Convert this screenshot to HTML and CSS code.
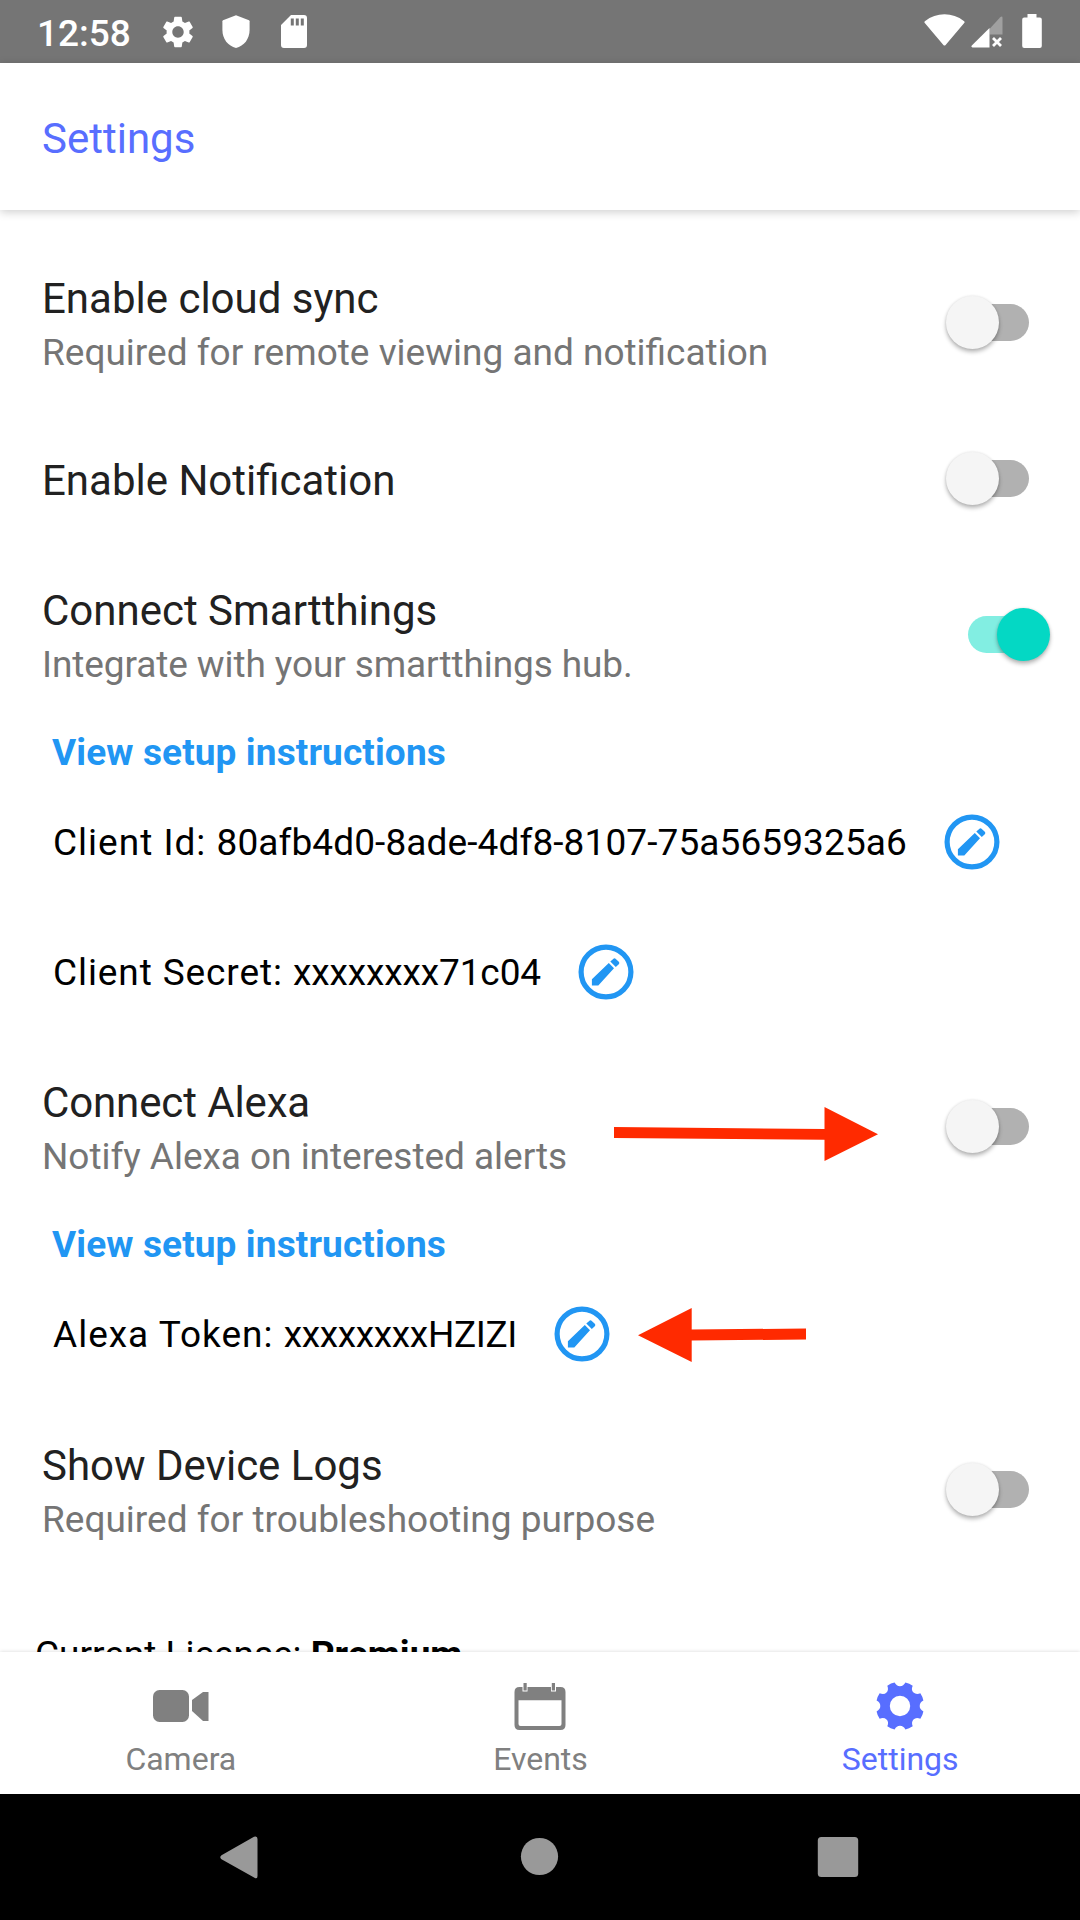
FILE: index.html
```
<!DOCTYPE html>
<html lang="en">
<head>
<meta charset="utf-8">
<title>Settings</title>
<link rel="stylesheet" href="styles.css">
</head>
<body>
<svg class="defs" aria-hidden="true">
  <symbol id="edit" viewBox="0 0 56 56">
    <circle cx="28" cy="28" r="24.9" fill="none" stroke="currentColor" stroke-width="5.2"/>
    <path fill="currentColor" d="M13.900 41.500V35.200L30.800 19 36 24.200 20.300 41.500zM32.300 17.500 35.200 14.900q1.300-1.200 2.600 0L40.800 17.800q1.200 1.200 0 2.500L37.800 22.900z"/>
  </symbol>
</svg>

<header class="status-bar">
  <span class="clock">12:58</span>
  <svg class="status-gear" viewBox="0 0 24 24"><path fill="#fff" d="M19.14 12.94c.04-.3.060-.61.060-.94 0-.32-.02-.64-.07-.94l2.030-1.580c.18-.14.230-.41.120-.61l-1.920-3.320c-.12-.22-.37-.29-.59-.22l-2.390.960c-.5-.38-1.030-.7-1.620-.94l-.36-2.540c-.04-.24-.24-.41-.48-.41h-3.840c-.24 0-.43.170-.47.410l-.36 2.540c-.59.240-1.130.570-1.620.940l-2.390-.96c-.22-.08-.47 0-.59.220L2.740 8.870c-.12.210-.08.470.120.610l2.030 1.580c-.05.300-.09.630-.09.940s.02.640.070.940l-2.030 1.580c-.18.140-.23.410-.12.610l1.920 3.320c.12.220.37.290.59.220l2.390-.96c.5.380 1.030.700 1.620.940l.36 2.540c.05.240.24.410.48.410h3.840c.24 0 .44-.17.470-.41l.36-2.540c.59-.24 1.130-.56 1.620-.94l2.390.960c.22.080.47 0 .59-.22l1.920-3.320c.12-.22.070-.47-.12-.61l-2.010-1.580zM12 15.600c-1.980 0-3.600-1.620-3.600-3.600s1.620-3.600 3.600-3.600 3.600 1.620 3.600 3.600-1.620 3.600-3.600 3.600z"/></svg>
  <svg class="status-shield" viewBox="0 0 28 33"><path fill="#fff" d="M14 .2 27 5.200q.6.3.6 1V15C27.600 24 22 31 14 33 6 31 .4 24 .4 15V6.200q0-.7.6-1z"/></svg>
  <svg class="status-card" viewBox="0 0 26 33"><path fill="#fff" fill-rule="evenodd" d="M10 0H23q3 0 3 3V30q0 3-3 3H3q-3 0-3-3V10zM9.800 3.500v7h3v-7zM14.800 3.500v7h3v-7zM19.800 3.500v7h3v-7z"/></svg>
  <div class="status-right">
    <svg class="wifi" viewBox="0 0 41 32"><path fill="#fff" d="M1 9.300Q-.3 8 1.200 6.900 9.800.3 20.500.3T39.800 6.900Q41.300 8 40 9.300L21.600 31q-1.100 1.200-2.200 0z"/></svg>
    <svg class="signal" viewBox="0 0 32 32"><path fill="#a0a0a0" d="M18.500 13 29 1.500Q31.500-.5 31.500 2V18.500h-13z"/><path fill="#fff" d="M18.500 12V31.500H1.500Q-.3 31 .8 29.500z"/><path stroke="#fff" stroke-width="2.800" d="m22 22 8 8m0-8-8 8"/></svg>
    <svg class="battery" viewBox="0 0 20 34"><path fill="#fff" d="M5.500 0h9v3.500h3.300q2 0 2 2V32q0 2-2 2H2.200q-2 0-2-2V5.500q0-2 2-2H5.500z"/></svg>
  </div>
</header>

<div class="app-bar"><h1>Settings</h1></div>

<main class="content">
  <section class="setting">
    <div class="label"><h2>Enable cloud sync</h2><p>Required for remote viewing and notification</p></div>
    <div class="switch"></div>
  </section>
  <section class="setting">
    <div class="label"><h2>Enable Notification</h2></div>
    <div class="switch"></div>
  </section>
  <section class="setting smartthings">
    <div class="label"><h2>Connect Smartthings</h2><p>Integrate with your smartthings hub.</p></div>
    <div class="switch on"></div>
  </section>
  <a class="instructions">View setup instructions</a>
  <div class="field"><span class="name">Client Id: </span><span class="value">80afb4d0-8ade-4df8-8107-75a5659325a6</span><svg class="edit"><use href="#edit"/></svg></div>
  <div class="field secret"><span class="name">Client Secret: </span><span class="value">xxxxxxxx71c04</span><svg class="edit"><use href="#edit"/></svg></div>
  <section class="setting alexa">
    <div class="label"><h2>Connect Alexa</h2><p>Notify Alexa on interested alerts</p></div>
    <svg class="arrow arrow-right" viewBox="0 0 264 54"><path fill="#ff2a00" d="M0 20 210.500 22V0L264 27.200 210.500 54V32.700L0 31z"/></svg>
    <div class="switch"></div>
  </section>
  <a class="instructions">View setup instructions</a>
  <div class="field token"><span class="name">Alexa Token: </span><span class="value">xxxxxxxxHZIZI</span><svg class="edit"><use href="#edit"/></svg>
    <svg class="arrow arrow-left" viewBox="0 0 168 54"><path fill="#ff2a00" d="M168 20.500 53.700 21.500V0L0 27.200 53.700 54V32.500L168 31.500z"/></svg>
  </div>
  <section class="setting logs">
    <div class="label"><h2>Show Device Logs</h2><p>Required for troubleshooting purpose</p></div>
    <div class="switch"></div>
  </section>
  <p class="license">Current License: <b>Premium</b></p>
</main>

<nav class="tabs">
  <div class="tab">
    <svg viewBox="0 0 56 48"><rect x="0" y="8" width="36" height="32" rx="6.500"/><path d="M39 20 50 12h5.500v29H50L39 31z" transform="translate(0 -2)"/></svg>
    <span>Camera</span>
  </div>
  <div class="tab">
    <svg viewBox="0 0 52 48"><path fill-rule="evenodd" d="M5 5H8.500V9.500H13.500V5H37V9.500H42V5H46.500Q51.500 5 51.500 10V43Q51.500 48 46.500 48H5.500Q.5 48 .5 43V10Q.5 5 5.500 5zM4.500 18.300V42q0 2 2 2H45.500q2 0 2-2V18.300zM9.500 1h3.200v7.500H9.500zM37.800 1H41v7.500H37.800z"/></svg>
    <span>Events</span>
  </div>
  <div class="tab active">
    <svg viewBox="0 0 48 48"><path fill-rule="evenodd" d="M29.400.6 Q33.500 1.400 36.700 3.650Q34.800 8 37.500 10.500T44.350 11.300Q46.800 15 47.400 18.600Q43.700 20.500 43.700 24T47.400 29.400Q46.600 33.500 44.350 36.700Q40 34.800 37.500 37.500T36.700 44.350Q33 46.800 29.400 47.400Q27.500 43.700 24 43.700T18.600 47.400Q14.500 46.600 11.300 44.350Q13.200 40 10.500 37.500T3.650 36.700Q1.200 33 .6 29.400Q4.300 27.500 4.300 24T.6 18.600Q1.400 14.500 3.650 11.300Q8 13.200 10.500 10.500T11.300 3.650Q15 1.200 18.600.6Q20.500 4.300 24 4.300T29.400.6zM24 13.800a10.200 10.200 0 1 0 0 20.400 10.200 10.200 0 0 0 0-20.400z"/></svg>
    <span>Settings</span>
  </div>
</nav>

<footer class="system-nav">
  <svg viewBox="0 0 44 44"><path fill="#999" d="M37 .8Q40.500-.5 40.500 3V40q0 3.500-3 1.800L4.500 23.300Q2 21.300 4.500 19.300z"/></svg>
  <svg viewBox="0 0 44 44"><circle cx="23.500" cy="20.500" r="18.600" fill="#999"/></svg>
  <svg viewBox="0 0 44 44"><rect x="1.800" y="1" width="40.400" height="40" rx="3.500" fill="#999"/></svg>
</footer>
</body>
</html>
```
FILE: styles.css
```
* { box-sizing: border-box; }
body {
  margin: 0;
  width: 1080px;
  height: 1920px;
  overflow: hidden;
  display: flex;
  flex-direction: column;
  background: #fff;
  font-family: Roboto, sans-serif;
}
h1, h2, p { margin: 0; font-weight: 400; }
svg { display: block; flex: none; }
.defs { position: absolute; width: 0; height: 0; }

.status-bar {
  flex: none;
  height: 63px;
  padding-left: 37px;
  display: flex;
  background: #757575;
  color: #fff;
}
.clock { width: 122px; font-size: 37px; line-height: 44px; font-weight: 500; padding-top: 12px; }
.status-gear { width: 38px; height: 38px; margin-top: 12.500px; }
.status-shield { width: 28px; height: 33px; margin: 15px 0 0 25px; }
.status-card { width: 26px; height: 33px; margin: 15px 0 0 31px; }
.status-right { display: flex; margin: 14px 38px 0 auto; }
.wifi { width: 41px; height: 32px; }
.signal { width: 32px; height: 32px; margin: 1.500px 0 0 6px; }
.battery { width: 20px; height: 34px; margin-left: 19px; }

.app-bar {
  flex: none;
  height: 147px;
  padding: 51px 0 0 42px;
  background: #fff;
  box-shadow: 0 2px 9px rgba(0, 0, 0, .2);
  z-index: 1;
}
.app-bar h1 { font-size: 42px; line-height: 49px; color: #586eff; }

.content {
  flex: 1;
  min-height: 0;
  overflow: hidden;
  padding-top: 34px;
  display: flex;
  flex-direction: column;
}
.setting {
  position: relative;
  flex: none;
  height: 156px;
  padding: 0 30px 0 42px;
  display: flex;
  align-items: center;
  justify-content: space-between;
}
.label { padding-top: 4px; }
.label h2 { font-size: 42px; line-height: 49px; color: #212121; }
.label p { margin-top: 8px; font-size: 37px; line-height: 43px; color: #757575; }
.smartthings p { letter-spacing: -.1px; }
.alexa h2 { letter-spacing: -.12px; }
.alexa p { letter-spacing: -.04px; }

.switch {
  position: relative;
  width: 72px;
  height: 37px;
  margin-right: 21px;
  border-radius: 19px;
  background: #b1b1b1;
}
.switch::after {
  content: "";
  position: absolute;
  left: -11px;
  top: -8px;
  width: 53px;
  height: 53px;
  border-radius: 50%;
  background: #f5f5f5;
  box-shadow: 0 3px 4px rgba(0, 0, 0, .28), 0 0 3px rgba(0, 0, 0, .1);
}
.switch.on { margin-right: 10px; background: #82eee2; }
.switch.on::after { left: 29px; background: #04d8c4; }

.instructions {
  flex: none;
  height: 65px;
  padding: 19px 0 0 52px;
  font-size: 37px;
  line-height: 43px;
  font-weight: 700;
  letter-spacing: .12px;
  color: #2196f3;
}
.field {
  position: relative;
  flex: none;
  height: 130px;
  padding-left: 53px;
  display: flex;
  align-items: center;
  font-size: 37px;
  line-height: 43px;
  color: #000;
}
.name { white-space: pre; letter-spacing: 1px; }
.value { letter-spacing: .1px; }
.edit { width: 56px; height: 56px; margin-left: 37px; color: #2196f3; }
.secret .name { letter-spacing: .9px; }
.secret .value { letter-spacing: -.1px; }
.token .value { letter-spacing: -.33px; }
.alexa { margin-top: 11px; }
.logs { margin-top: 12px; }

.arrow { position: absolute; }
.arrow-right { left: 614px; top: 59px; width: 264px; height: 54px; }
.arrow-left { left: 637.500px; top: 38.500px; width: 168px; height: 54px; }

.license { flex: none; margin: 66px 0 0 35px; font-size: 37px; line-height: 43px; color: #000; }

.tabs {
  flex: none;
  height: 142px;
  padding-left: 1px;
  display: grid;
  grid-template-columns: repeat(3, 1fr);
  background: #fff;
  box-shadow: 0 0 4px rgba(0, 0, 0, .16);
  z-index: 1;
}
.tab {
  padding-top: 29.500px;
  display: flex;
  flex-direction: column;
  align-items: center;
  font-size: 32px;
  line-height: 38px;
  color: #808080;
}
.tab svg { height: 48px; fill: currentColor; }
.tab span { margin-top: 10.500px; }
.tab.active { color: #586eff; }

.system-nav {
  flex: none;
  height: 126px;
  padding: 42px 220px 0 216.500px;
  display: flex;
  justify-content: space-between;
  background: #000;
}
.system-nav svg { width: 44px; height: 44px; }
```
